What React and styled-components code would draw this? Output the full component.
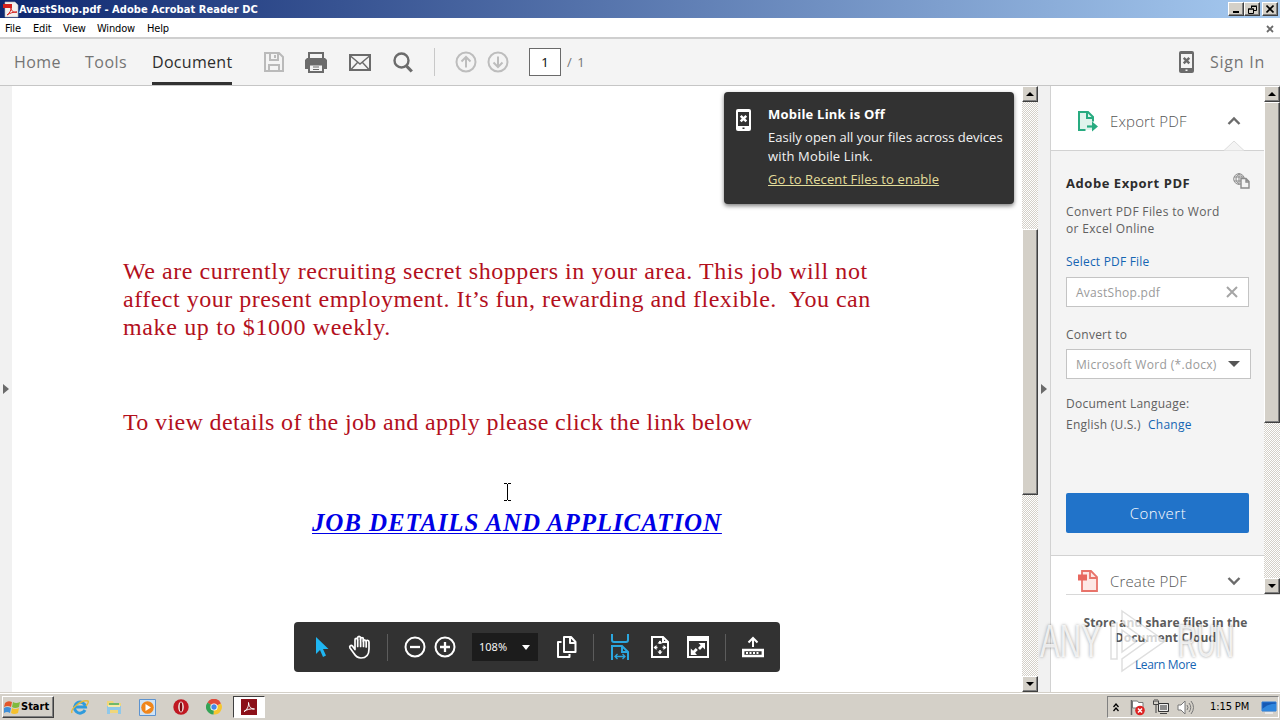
import styled, { createGlobalStyle, css } from 'styled-components'

const ui = '"Open Sans", "Noto Sans", sans-serif'
const tahoma = '"DejaVu Sans Condensed", "DejaVu Sans", sans-serif'

const GlobalStyle = createGlobalStyle`
  * {
    box-sizing: border-box;
  }

  body {
    margin: 0;
    overflow: hidden;
    font-family: ${ui};
  }

  svg {
    display: block;
    flex-shrink: 0;
  }
`

const raised = css`
  background: #d4d0c8;
  border: 1px solid;
  border-color: #fff #404040 #404040 #fff;
  box-shadow: inset -1px -1px 0 #808080;
`

const Screen = styled.div`
  display: flex;
  flex-direction: column;
  width: 1280px;
  height: 720px;
  background: #fff;
`

/* window chrome */

const TitleBar = styled.header`
  display: flex;
  align-items: center;
  height: 18px;
  padding: 0 2px 0 3px;
  background: linear-gradient(90deg, #0f2870, #a6caf0);
`

const Title = styled.div`
  flex: 1;
  padding-top: 1px;
  color: #fff;
  font: bold 11px/17px ${tahoma};
  letter-spacing: 0.05px;
`

const WindowButton = styled.div`
  ${raised}
  display: flex;
  align-items: center;
  justify-content: center;
  width: 16px;
  height: 14px;
  margin-left: ${({ $gap }) => $gap || 0}px;
`

const MenuBar = styled.nav`
  display: flex;
  align-items: center;
  gap: 12px;
  height: 21px;
  padding: 2px 6px 0 5px;
  border-bottom: 2px solid #cfcfcf;
  font: 11px/17px ${tahoma};
  color: #000;
`

const MenuItem = styled.span`
  width: ${({ $width }) => $width}px;
  white-space: nowrap;
  letter-spacing: -0.17px;
`

const Spacer = styled.div`
  flex: 1;
`

/* top toolbar */

const Toolbar = styled.div`
  display: flex;
  align-items: center;
  height: 47px;
  padding: 0 15px 0 14px;
  background: #f4f4f4;
  border-bottom: 1px solid #c6c6c6;
`

const Tab = styled.div`
  height: 46px;
  margin-right: ${({ $gap }) => $gap}px;
  width: ${({ $width }) => $width}px;
  font-size: 16px;
  line-height: 46px;
  letter-spacing: ${({ $track }) => $track}px;
  white-space: nowrap;
  color: ${({ $active }) => $active ? '#2d2d2d' : '#747474'};
  border-bottom: ${({ $active }) => $active ? '3px solid #323232' : 'none'};
`

const ToolIcon = styled.div`
  display: flex;
  margin-right: ${({ $gap }) => $gap}px;
`

const Divider = styled.div`
  width: 1px;
  height: ${({ $height }) => $height}px;
  margin-right: ${({ $gap }) => $gap}px;
  background: ${({ $color }) => $color};
`

const PageBox = styled.div`
  width: 32px;
  height: 28px;
  border: 1px solid #6a6a6a;
  background: #fff;
  color: #111;
  font: 13px/26px "Noto Sans", sans-serif;
  text-align: center;
`

const PageTotal = styled.span`
  margin-left: 6px;
  color: #747474;
  font-size: 13px;
  letter-spacing: 1px;
`

const SignIn = styled.span`
  width: 55px;
  margin-left: 16px;
  color: #747474;
  font-size: 16px;
  letter-spacing: 0.75px;
  white-space: nowrap;
`

/* work area */

const Main = styled.main`
  display: flex;
  height: 606px;
`

const Gutter = styled.div`
  display: flex;
  align-items: center;
  justify-content: center;
  width: 12px;
  background: #f1f1f1;
`

const DocArea = styled.section`
  position: relative;
  width: 1010px;
  padding: 171px 0 0 111px;
  background: #fff;
`

const Paragraph = styled.p`
  margin: 0 0 ${({ $after }) => $after}px;
  color: #b3101d;
  font: 24px/28px "Liberation Serif", serif;
`

const Line = styled.span`
  display: block;
  white-space: pre;
  letter-spacing: ${({ $track }) => $track}px;
`

const JobLink = styled.a`
  display: block;
  width: max-content;
  margin-left: 189px;
  color: #0000e6;
  font: italic bold 25px/28px "Liberation Serif", serif;
  letter-spacing: ${({ $track }) => $track}px;
  text-decoration: underline;
  text-decoration-thickness: 1px;
  text-underline-offset: 2px;
  white-space: nowrap;
`

const Caret = styled.svg`
  position: absolute;
  left: 491px;
  top: 397px;
`

const Toast = styled.aside`
  position: absolute;
  left: 712px;
  top: 6px;
  display: flex;
  gap: 17px;
  width: 290px;
  height: 112px;
  padding: 12px 0 0 12px;
  border-radius: 4px;
  background: #323232;
  box-shadow: 0 2px 4px rgba(0, 0, 0, 0.5);
  color: #f2f2f2;
  font-size: 13px;
  line-height: 19px;
  white-space: nowrap;
`

const ToastIcon = styled.div`
  padding-top: 5px;
`

const ToastTitle = styled.div`
  margin-bottom: 5px;
  line-height: 20px;
  font-weight: 700;
  color: #fff;
  letter-spacing: 0.22px;
`

const ToastText = styled.div`
  margin-top: -1px;
  letter-spacing: ${({ $track }) => $track}px;
  margin-bottom: 1px;
`

const ToastLink = styled.div`
  margin-top: 4px;
  color: #e3dd9b;
  text-decoration: underline;
  letter-spacing: 0.1px;
`

const FloatBar = styled.div`
  position: absolute;
  left: 282px;
  top: 536px;
  display: flex;
  align-items: center;
  width: 486px;
  height: 50px;
  padding-left: 18px;
  border-radius: 4px;
  background: #323232;
`

const ZoomBox = styled.div`
  display: flex;
  align-items: center;
  justify-content: space-between;
  width: 66px;
  height: 28px;
  margin-right: 19px;
  padding: 0 8px 0 7px;
  background: #1c1c1c;
  color: #f4f4f4;
  font: 11px/28px "Noto Sans", sans-serif;
`

/* classic scrollbars */

const Track = styled.div`
  display: flex;
  flex-direction: column;
  width: 16px;
  height: ${({ $height }) => $height}px;
  background-color: #fff;
  background-image: conic-gradient(#d4d0c8 25%, transparent 0 50%, #d4d0c8 0 75%, transparent 0);
  background-size: 2px 2px;
`

const ScrollButton = styled.div`
  ${raised}
  display: flex;
  align-items: center;
  justify-content: center;
  height: 16px;
`

const Thumb = styled.div`
  ${raised}
  height: ${({ $height }) => $height}px;
  margin: ${({ $before }) => $before}px 0 auto;
`

/* right-hand panel */

const Side = styled.aside`
  width: 230px;
  border-left: 1px solid #d2d2d2;
  background: #fff;
`

const SideScroll = styled.div`
  display: flex;
  height: 508px;
`

const SideBody = styled.div`
  width: 213px;
`

const SectionHead = styled.div`
  position: relative;
  display: flex;
  align-items: center;
  height: ${({ $height }) => $height}px;
  padding: ${({ $top }) => $top}px 23px 0 ${({ $left }) => $left}px;
  color: #747474;
`

const SectionTitle = styled.div`
  flex: 1;
  margin-left: ${({ $left }) => $left}px;
  font-size: 15px;
  font-weight: 300;
  color: #555;
  letter-spacing: 0.15px;
`

const Notch = styled.svg`
  position: absolute;
  right: 20px;
  bottom: -1px;
`

const ExportPanel = styled.div`
  height: 406px;
  padding: 23px 0 0 15px;
  border: solid #d2d2d2;
  border-width: 1px 0;
  background: #f4f4f4;
  color: #606060;
  font-size: 12px;
  line-height: 17px;
  white-space: nowrap;
`

const PanelTitle = styled.div`
  display: flex;
  justify-content: space-between;
  height: 19px;
  padding-right: 14px;
  color: #2d2d2d;
  font-size: 13px;
  font-weight: 700;
  line-height: 19px;
  letter-spacing: 0.55px;
`

const CloudBadge = styled.svg`
  margin-top: -1px;
`

const PanelText = styled.div`
  margin-top: ${({ $top }) => $top || 0}px;
  letter-spacing: ${({ $track }) => $track || 0}px;
`

const BlueLink = styled.a`
  color: #1565b3;
  margin-left: ${({ $left }) => $left || 0}px;
`

const Field = styled.div`
  display: flex;
  align-items: center;
  justify-content: space-between;
  width: ${({ $width }) => $width}px;
  height: 30px;
  margin-top: ${({ $top }) => $top}px;
  padding: 0 10px 0 9px;
  border: 1px solid #c4c4c4;
  background: #fff;
  color: #9a9a9a;
  letter-spacing: ${({ $track }) => $track}px;
`

const ConvertButton = styled.div`
  width: 183px;
  height: 40px;
  margin-top: 60px;
  padding-left: 1px;
  border-radius: 2px;
  background: #2173c9;
  color: #fff;
  font-size: 15px;
  font-weight: 300;
  line-height: 40px;
  letter-spacing: 0.5px;
  text-align: center;
`

const Cloud = styled.div`
  position: relative;
  height: 98px;
  margin-left: 15px;
  padding: 20px 15px 0 0;
  border-top: 1px solid #d8d8d8;
  color: #5c5c5c;
  font-size: 12px;
  line-height: 15px;
  text-align: center;
`

const CloudTitle = styled.div`
  font-weight: 700;
  letter-spacing: 0.13px;
  white-space: nowrap;
`

const CloudLink = styled.div`
  margin-top: 12px;
  color: #1565b3;
  letter-spacing: -0.35px;
`

const Watermark = styled.div`
  position: absolute;
  left: -26px;
  top: 13px;
  display: flex;
  align-items: center;
  color: rgba(255, 255, 255, 0.78);
  font: 47px/66px "Liberation Sans", sans-serif;
  text-shadow: 0 0 4px rgba(0, 0, 0, 0.4);
`

const Mark = styled.span`
  width: ${({ $width }) => $width}px;
  transform: scaleX(${({ $squeeze }) => $squeeze});
  transform-origin: left;
`

/* taskbar */

const Taskbar = styled.footer`
  display: flex;
  align-items: center;
  height: 28px;
  padding: 2px 0 1px 2px;
  background: #d4d0c8;
  border-top: 1px solid #d4d0c8;
  box-shadow: inset 0 1px 0 #fff;
`

const StartButton = styled.div`
  ${raised}
  display: flex;
  align-items: center;
  width: 52px;
  height: 22px;
  padding-left: 1px;
  margin-right: 17px;
  font: bold 11px/20px ${tahoma};
  color: #000;
`

const QuickIcon = styled.div`
  display: flex;
  width: 18px;
  margin-right: ${({ $gap }) => $gap || 15.5}px;
  justify-content: center;
`

const ActiveTask = styled.div`
  display: flex;
  align-items: center;
  justify-content: center;
  width: 32px;
  height: 22px;
  border: 1px solid;
  border-color: #404040 #fff #fff #404040;
  background: #fff;
`

const Tray = styled.div`
  display: flex;
  align-items: center;
  height: 22px;
  width: 172px;
  padding-left: 5px;
  margin-right: 1px;
  border: 1px solid;
  border-color: #808080 #fff #fff #808080;
`

const TrayIcon = styled.div`
  margin-right: ${({ $gap }) => $gap}px;
`

const Clock = styled.div`
  width: 51px;
  font: 11px/20px ${tahoma};
  letter-spacing: -0.1px;
  white-space: nowrap;
  color: #000;
`

const Arrow = ({ dir = 'down', w = 8, h = 4, color = '#000' }) => {
  const d = {
    down: `M0 0h${w}L${w / 2} ${h}z`,
    up: `M0 ${h}h${w}L${w / 2} 0z`,
    right: `M0 0v${h}L${w} ${h / 2}z`,
  }[dir]
  return <svg width={w} height={h}><path d={d} fill={color} /></svg>
}

const Chevron = ({ up }) => (
  <svg width="14" height="10" fill="none" stroke="#6b6b6b" strokeWidth="2.4">
    <path d={up ? 'M1.5 8 7 2.5 12.5 8' : 'M1.5 2 7 7.5 12.5 2'} />
  </svg>
)

const Phone = ({ color, inner }) => (
  <svg width="15" height="22">
    <rect x="0" y="0" width="15" height="22" rx="2" fill={color} />
    <rect x="2" y="3" width="11" height="14" fill={inner} />
    <path d="m4.700 6.800 5.600 5.600m0-5.600-5.600 5.600" stroke={color} strokeWidth="2.4" />
    <rect x="6.500" y="18.500" width="2" height="1.500" fill={inner} />
  </svg>
)

const AcrobatFile = () => (
  <svg width="16" height="17" viewBox="0 0 16 17">
    <path d="M2 1h10l3 3v12H2z" fill="#f3f1ef" stroke="#b8b8b8" strokeWidth=".6" />
    <path d="M0 3h9v4H0z" fill="#d5201c" />
    <path d="M4 14c3-2 4-5 4-7 0 3 3 5 6 4-4 0-7 1-10 3z" fill="none" stroke="#d5201c" />
  </svg>
)

const SaveIcon = () => (
  <svg width="20" height="20" fill="none" stroke="#bababa" strokeWidth="2">
    <path d="M1 1h14l4 4v14H1zM6 1v7h8V1M5 19v-6h10v6M11 3v3" />
  </svg>
)

const PrintIcon = () => (
  <svg width="22" height="21">
    <path d="M4 6V1h14v5" fill="none" stroke="#6b6b6b" strokeWidth="2" />
    <path d="M2 6h18l2 2v9H0V8z" fill="#6b6b6b" />
    <path d="M4 12.500h14V20H4z" fill="#f4f4f4" stroke="#6b6b6b" strokeWidth="2" />
    <path d="M8 15h6M8 17.500h6" stroke="#6b6b6b" />
  </svg>
)

const MailIcon = () => (
  <svg width="22" height="17" fill="none" stroke="#6b6b6b">
    <path d="M1 1h20v15H1z" strokeWidth="2" />
    <path d="m1.5 2 9.500 8 9.500-8M2 15.500l6.500-7M20 15.500l-6.500-7" strokeWidth="1.4" />
  </svg>
)

const SearchIcon = () => (
  <svg width="20" height="21" fill="none" stroke="#6b6b6b">
    <circle cx="8.500" cy="8.500" r="7" strokeWidth="2.4" />
    <path d="m13.500 14 5.300 5.500" strokeWidth="3.200" />
  </svg>
)

const PageArrow = ({ down }) => (
  <svg width="22" height="22" fill="none" stroke="#bdbdbd" strokeWidth="2">
    <circle cx="11" cy="11" r="9.500" />
    <path d={down ? 'M11 5.500v10M6.500 11.500l4.500 4.500 4.500-4.500' : 'M11 16.500v-10M6.500 10.500 11 6l4.500 4.500'} />
  </svg>
)

const SelectIcon = () => (
  <svg width="20" height="22">
    <path d="M4 1v17l4-4 3 7 3-1.500-3-6.500h5.500z" fill="#1fb6f2" />
  </svg>
)

const HandIcon = () => (
  <svg width="24" height="24" fill="none" stroke="#fff" strokeWidth="1.7" strokeLinejoin="round" strokeLinecap="round">
    <path d="M7 13.500V4.800c0-2 2.600-2 2.600 0V3c0-2.200 2.900-2.200 2.900 0v1.200c0-2 2.900-2 2.900 0v2.300c0-2 2.700-2 2.700 0C18.100 5 21 5 21 7v7c0 6-3 9-8 9-4 0-5.500-2-7-4.500L2 13c-1-2 1-3.400 2.600-1.800L7 14.500" />
    <path d="M9.700 5v6.500M12.600 4.500v7M15.500 4.500v7M18.200 7v5" />
  </svg>
)

const ZoomIcon = ({ plus }) => (
  <svg width="22" height="22" fill="none" stroke="#fff" strokeWidth="2">
    <circle cx="11" cy="11" r="9.500" />
    <path d={plus ? 'M6 11h10M11 6v10' : 'M6 11h10'} strokeWidth="2.300" />
  </svg>
)

const CopyIcon = () => (
  <svg width="20" height="22" fill="none" stroke="#fff" strokeWidth="2" strokeLinejoin="round">
    <path d="M7 1h7l4.500 5v10H7zM13 1v6h5.500M4.500 6H1v15h11.500v-3" />
  </svg>
)

const FitWidthIcon = () => (
  <svg width="18" height="26" fill="none" stroke="#2ba7df" strokeWidth="2">
    <path d="M1 0v6q0 2 2 2h12q2 0 2-2V0M1 26V12h10l6 6v8M11 12v6h6" />
    <path d="M4 22.500h10M6.500 20 4 22.500 6.500 25M11.500 20l2.500 2.500-2.500 2.500" strokeWidth="1.300" />
  </svg>
)

const FitPageIcon = () => (
  <svg width="18" height="22" fill="none" stroke="#fff" strokeWidth="2">
    <path d="M1 1h11l5 5v15H1zM12 1v5h5" />
    <path d="M9 5v3M9 14v3M3.500 11.500h3M11.500 11.500h3" strokeWidth="1.500" />
    <path d="m6.500 7.500 2.500-3 2.500 3zM6.500 15.500l2.500 3 2.500-3zM5.500 9l-3 2.500 3 2.500zM12.500 9l3 2.500-3 2.500z" fill="#fff" stroke="none" />
  </svg>
)

const FullIcon = () => (
  <svg width="22" height="22">
    <path d="M1 1h20v20H1z" fill="none" stroke="#fff" strokeWidth="2" />
    <path d="M1 1h20v4H1z" fill="#fff" />
    <path d="M11.500 7H18v6.500l-2.300-2.300-2.700 2.700-2-2 2.700-2.700zM10 19H3.800v-6.500l2.300 2.300 2.700-2.700 2 2-2.700 2.700z" fill="#fff" />
  </svg>
)

const ShareIcon = () => (
  <svg width="22" height="22" fill="none" stroke="#fff" strokeWidth="2">
    <path d="M11 11V2M6.500 6.500 11 2l4.500 4.500" />
    <path d="M1.200 14h19.600v6H1.200z" strokeWidth="2.400" />
    <path d="M4 17h14" strokeDasharray="2 1.500" />
  </svg>
)

const ExportIcon = () => (
  <svg width="22" height="22">
    <path d="M2 2h9l5 5v13H2z" fill="#e0f4ec" />
    <path d="M8.500 20H2V2h9l5 5v4.500M10 2v6h6" fill="none" stroke="#28ab80" strokeWidth="2" />
    <path d="M10 16.500h8" fill="none" stroke="#28ab80" strokeWidth="2.200" />
    <path d="m15 11.500 6 5-6 5z" fill="#28ab80" />
  </svg>
)

const CreateIcon = () => (
  <svg width="20" height="22">
    <path d="M4 1h9l6 6v14H4z" fill="#fde8e5" stroke="#e8736a" strokeWidth="1.800" />
    <path d="M12 1v7h7" fill="none" stroke="#e8736a" strokeWidth="1.800" />
    <path d="M0 4.500h9v6H0z" fill="#e8675e" />
  </svg>
)

const GlobeDoc = () => (
  <CloudBadge width="17" height="16" fill="none" stroke="#8b8b8b">
    <circle cx="6" cy="6" r="5.300" />
    <path d="M6 .5v11M1 4h10M1 8h8M6 .7C2 4 2 8 6 11.300M6 .7c2 1.300 3 3 3.200 4" />
    <path d="M8 5.500h5l3 3V15H8zM13 5.500V9h3" fill="#f4f4f4" strokeWidth="1.400" />
  </CloudBadge>
)

const PlayMark = () => (
  <svg width="70" height="64" fill="rgba(255,255,255,.75)" stroke="rgba(0,0,0,.13)" strokeWidth="1.500">
    <path d="M3 14h6v36H3zM14 2l43 30-43 30V50l25-18-25-18z" />
    <path d="M14 21l15 11-15 11z" />
  </svg>
)

const Flag = () => (
  <svg width="17" height="16" viewBox="0 0 17 16">
    <path d="M1 4q3-3 7-1L7 8Q4 6 0 8z" fill="#e2572b" />
    <path d="M9 3q3 2 7 0l-1 5q-4 2-7 0z" fill="#7fba3c" />
    <path d="M0 9q3-2 7 0l-1 5q-3-2-6 0z" fill="#3f8fd8" />
    <path d="M8 9q3 2 7 0l-1 5q-4 2-7 0z" fill="#f5c02c" />
  </svg>
)

const IeIcon = () => (
  <svg width="18" height="18" fill="none">
    <path d="M14 12A5.500 5.500 0 1 1 14.500 9H5" stroke="#2f9bdc" strokeWidth="3" />
    <path d="M1 15C-1 11 11 1 17 3c1 1-1 4-2 5" stroke="#e5b93a" strokeWidth="1.400" />
  </svg>
)

const FolderIcon = () => (
  <svg width="18" height="18">
    <path d="M2 3h6l1 2h7v10H2z" fill="#f0d67a" />
    <path d="M4 5h10v3H4z" fill="#6fb96a" />
    <path d="M2 8h14v8h-3v-4H5v4H2z" fill="#8fc8ea" />
    <path d="M3 7h12v2H3z" fill="#f8eaa8" />
  </svg>
)

const PlayerIcon = () => (
  <svg width="17" height="17">
    <path d="M.5.500h16v16H.5z" fill="#cfe3f6" stroke="#5d93cf" />
    <circle cx="8.500" cy="8.500" r="6.300" fill="#f0861c" />
    <path d="m6.500 5 5.500 3.500L6.500 12z" fill="#fff" />
  </svg>
)

const OperaIcon = () => (
  <svg width="16" height="16">
    <circle cx="8" cy="8" r="7.700" fill="#c01822" />
    <ellipse cx="8" cy="8" rx="2.800" ry="5.400" fill="#f3e9e6" />
    <ellipse cx="8" cy="8" rx="1.300" ry="4.700" fill="#7e0a10" />
  </svg>
)

const ChromeIcon = () => (
  <svg width="16" height="16">
    <path d="M8 8 1.500 3.500a7.500 7.500 0 0 1 13.500 1z" fill="#e04a3a" />
    <path d="M8 8 15 4.500A7.500 7.500 0 0 1 7.500 15.500z" fill="#f6c62f" />
    <path d="M8 8 7.500 15.500A7.500 7.500 0 0 1 1.500 3.500z" fill="#35a356" />
    <circle cx="8" cy="8" r="3.600" fill="#fff" />
    <circle cx="8" cy="8" r="2.700" fill="#4587e8" />
  </svg>
)

const ReaderIcon = () => (
  <svg width="16" height="16">
    <path d="M0 0h16v16H0z" fill="#8c1018" />
    <path d="M3 12.500C6 11 8 7 7.500 3.500 8 8 10 10 13.500 10 9 9.500 6 10.500 3 12.500z" fill="none" stroke="#fff" />
  </svg>
)

const FlagAlert = () => (
  <svg width="17" height="17">
    <path d="M2.500 1v15" stroke="#666" strokeWidth="1.500" />
    <path d="M3.500 2h5l1 1.500h4.500v7H9L8 9H3.500z" fill="#fff" stroke="#777" />
    <circle cx="11" cy="11.500" r="4.800" fill="#d22" />
    <path d="m9 9.500 4 4m0-4-4 4" stroke="#fff" strokeWidth="1.500" />
  </svg>
)

const NetworkIcon = () => (
  <svg width="17" height="16">
    <path d="M5.500 4.500h10v8h-10z" fill="#8c8c8c" stroke="#333" />
    <path d="M6.500 5.500h8v6h-8z" fill="none" stroke="#eee" />
    <path d="M7 14.500h7M3 6v8M.5 1.500v4h5v-4M2 0v3M4 0v3" stroke="#444" fill="none" />
  </svg>
)

const SoundIcon = () => (
  <svg width="17" height="15" fill="none" stroke="#777">
    <path d="M1 5h3l4-4v13l-4-4H1z" fill="#fff" />
    <path d="M10 5q2 2.500 0 5M12 3q3.500 4.500 0 9M14 1q5 6.500 0 13" />
  </svg>
)

const ScreenIcon = () => (
  <svg width="16" height="13">
    <path d="M1 1h14v9H1z" fill="#1659b4" stroke="#2b7bd6" />
    <path d="M1 8q7-6 14-5v7H1z" fill="#2f86dd" />
    <path d="M4 12h8" stroke="#e8e8e8" strokeWidth="2" />
  </svg>
)

const menus = [['File', 16], ['Edit', 18], ['View', 22], ['Window', 38], ['Help', 24]]

function Scrollbar({ height, before, thumb }) {
  return (
    <Track $height={height}>
      <ScrollButton><Arrow dir="up" /></ScrollButton>
      <Thumb $before={before} $height={thumb} />
      <ScrollButton><Arrow /></ScrollButton>
    </Track>
  )
}

function TopToolbar() {
  return (
    <Toolbar>
      <Tab $width={46} $gap={25} $track={0.4}>Home</Tab>
      <Tab $width={42} $gap={25} $track={0.5}>Tools</Tab>
      <Tab $width={80} $gap={32} $track={0.3} $active>Document</Tab>
      <ToolIcon $gap={21}><SaveIcon /></ToolIcon>
      <ToolIcon $gap={22}><PrintIcon /></ToolIcon>
      <ToolIcon $gap={22}><MailIcon /></ToolIcon>
      <ToolIcon $gap={21}><SearchIcon /></ToolIcon>
      <Divider $height={28} $gap={20} $color="#c8c8c8" />
      <ToolIcon $gap={10}><PageArrow /></ToolIcon>
      <ToolIcon $gap={20}><PageArrow down /></ToolIcon>
      <PageBox>1</PageBox>
      <PageTotal>/ 1</PageTotal>
      <Spacer />
      <Phone color="#6b6b6b" inner="#f4f4f4" />
      <SignIn>Sign In</SignIn>
    </Toolbar>
  )
}

function MobileLinkToast() {
  return (
    <Toast>
      <ToastIcon><Phone color="#fff" inner="#323232" /></ToastIcon>
      <div>
        <ToastTitle>Mobile Link is Off</ToastTitle>
        <ToastText $track={0}>Easily open all your files across devices</ToastText>
        <ToastText $track={0.15}>with Mobile Link.</ToastText>
        <ToastLink>Go to Recent Files to enable</ToastLink>
      </div>
    </Toast>
  )
}

function PageControls() {
  return (
    <FloatBar>
      <ToolIcon $gap={16}><SelectIcon /></ToolIcon>
      <ToolIcon $gap={15}><HandIcon /></ToolIcon>
      <Divider $height={27} $gap={16} $color="#5c5c5c" />
      <ToolIcon $gap={8}><ZoomIcon /></ToolIcon>
      <ToolIcon $gap={16}><ZoomIcon plus /></ToolIcon>
      <ZoomBox>108% <Arrow w={8} h={5} color="#fff" /></ZoomBox>
      <ToolIcon $gap={16}><CopyIcon /></ToolIcon>
      <Divider $height={27} $gap={17} $color="#5c5c5c" />
      <ToolIcon $gap={22}><FitWidthIcon /></ToolIcon>
      <ToolIcon $gap={18}><FitPageIcon /></ToolIcon>
      <ToolIcon $gap={16}><FullIcon /></ToolIcon>
      <Divider $height={27} $gap={16} $color="#5c5c5c" />
      <ShareIcon />
    </FloatBar>
  )
}

function DocumentView() {
  return (
    <DocArea>
      <Paragraph $after={67}>
        <Line $track={0.55}>We are currently recruiting secret shoppers in your area. This job will not</Line>
        <Line $track={0.5}>affect your present employment. It’s fun, rewarding and flexible.  You can</Line>
        <Line $track={0.65}>make up to $1000 weekly.</Line>
      </Paragraph>
      <Paragraph $after={73}>
        <Line $track={0.36}>To view details of the job and apply please click the link below</Line>
      </Paragraph>
      <JobLink $track={0.87}>JOB DETAILS AND APPLICATION</JobLink>
      <Caret width="9" height="18" fill="none" stroke="#000">
        <path d="M1 .5h3M5 .5h3M4.500 1v16M1 17.500h3M5 17.500h3" />
      </Caret>
      <MobileLinkToast />
      <PageControls />
    </DocArea>
  )
}

function SidePanel() {
  return (
    <Side>
      <SideScroll>
        <SideBody>
          <SectionHead $height={64} $top={6} $left={26}>
            <ExportIcon />
            <SectionTitle $left={11}>Export PDF</SectionTitle>
            <Chevron up />
            <Notch width="20" height="11">
              <path d="M0 10.500 10 1l10 9.500" fill="#f4f4f4" stroke="#dcdcdc" />
            </Notch>
          </SectionHead>
          <ExportPanel>
            <PanelTitle>Adobe Export PDF <GlobeDoc /></PanelTitle>
            <PanelText $top={10} $track={0.33}>Convert PDF Files to Word</PanelText>
            <PanelText $track={0.33}>or Excel Online</PanelText>
            <PanelText $top={16} $track={0.2}><BlueLink>Select PDF File</BlueLink></PanelText>
            <Field $width={183} $top={7} $track={0.27}>
              AvastShop.pdf
              <svg width="12" height="12" stroke="#a5a5a5" strokeWidth="2"><path d="m1 1 10 10m0-10L1 11" /></svg>
            </Field>
            <PanelText $top={19} $track={0.25}>Convert to</PanelText>
            <Field $width={185} $top={6} $track={0.33}>
              Microsoft Word (*.docx)
              <Arrow w={12} h={6} color="#555" />
            </Field>
            <PanelText $top={16} $track={0.25}>Document Language:</PanelText>
            <PanelText $top={4} $track={0.23}>English (U.S.) <BlueLink $left={4}>Change</BlueLink></PanelText>
            <ConvertButton>Convert</ConvertButton>
          </ExportPanel>
          <SectionHead $height={38} $top={12} $left={27}>
            <CreateIcon />
            <SectionTitle $left={12}>Create PDF</SectionTitle>
            <Chevron />
          </SectionHead>
        </SideBody>
        <Scrollbar height={508} before={0} thumb={321} />
      </SideScroll>
      <Cloud>
        <CloudTitle>Store and share files in the<br />Document Cloud</CloudTitle>
        <CloudLink>Learn More</CloudLink>
        <Watermark>
          <Mark $width={68} $squeeze={0.63}>ANY</Mark>
          <PlayMark />
          <Mark $width={60} $squeeze={0.55}>RUN</Mark>
        </Watermark>
      </Cloud>
    </Side>
  )
}

export default function App() {
  return (
    <>
      <GlobalStyle />
      <Screen>
        <TitleBar>
          <AcrobatFile />
          <Title>AvastShop.pdf - Adobe Acrobat Reader DC</Title>
          <WindowButton><svg width="8" height="8"><path d="M1 7h6" stroke="#000" strokeWidth="2" /></svg></WindowButton>
          <WindowButton>
            <svg width="9" height="9" fill="none" stroke="#000"><path d="M3 1.500h5.500v4H6M3.500 1v2M.5 4h5v4.500h-5zM3 1h6M0 4h6" /></svg>
          </WindowButton>
          <WindowButton $gap={2}><svg width="8" height="8" stroke="#000" strokeWidth="1.600"><path d="m.5.500 7 7m0-7-7 7" /></svg></WindowButton>
        </TitleBar>
        <MenuBar>
          {menus.map(([label, width]) => <MenuItem key={label} $width={width}>{label}</MenuItem>)}
          <Spacer />
          <svg width="8" height="8" stroke="#6b6b6b" strokeWidth="1.800"><path d="m1 1 6 6m0-6L1 7" /></svg>
        </MenuBar>
        <TopToolbar />
        <Main>
          <Gutter><Arrow dir="right" w={6} h={10} color="#6b6b6b" /></Gutter>
          <DocumentView />
          <Scrollbar height={606} before={127} thumb={266} />
          <Gutter><Arrow dir="right" w={6} h={10} color="#6b6b6b" /></Gutter>
          <SidePanel />
        </Main>
        <Taskbar>
          <StartButton><Flag />Start</StartButton>
          <QuickIcon><IeIcon /></QuickIcon>
          <QuickIcon><FolderIcon /></QuickIcon>
          <QuickIcon><PlayerIcon /></QuickIcon>
          <QuickIcon><OperaIcon /></QuickIcon>
          <QuickIcon $gap={10}><ChromeIcon /></QuickIcon>
          <ActiveTask><ReaderIcon /></ActiveTask>
          <Spacer />
          <Tray>
            <TrayIcon $gap={10}>
              <svg width="6" height="9" fill="none" stroke="#000" strokeWidth="1.300"><path d="m.5 4 2.500-3 2.500 3M.5 8 3 5l2.500 3" /></svg>
            </TrayIcon>
            <TrayIcon $gap={7}><FlagAlert /></TrayIcon>
            <TrayIcon $gap={7}><NetworkIcon /></TrayIcon>
            <TrayIcon $gap={16}><SoundIcon /></TrayIcon>
            <Clock>1:15 PM</Clock>
            <ScreenIcon />
          </Tray>
        </Taskbar>
      </Screen>
    </>
  )
}
